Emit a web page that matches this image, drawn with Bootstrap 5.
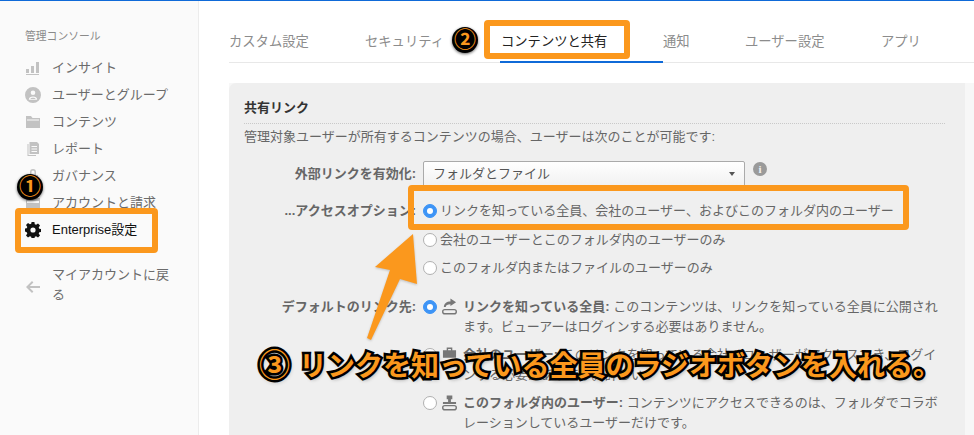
<!doctype html>
<html lang="ja"><head><meta charset="utf-8">
<link rel="stylesheet" href="https://cdn.jsdelivr.net/npm/bootstrap@5.3.0/dist/css/bootstrap.min.css">
<style>
html,body{height:435px;overflow:hidden}
body{font-family:"Liberation Sans","Noto Sans CJK JP",sans-serif;font-size:13px;line-height:20px;color:#666;background:#fff;position:relative}
.shell{height:435px;border-top:1px solid #0f6ad8}
.side{width:199px;flex:none;background:#fafafa;border-right:1px solid #ececec;padding:28px 0 0 25px}
.side-title{font-size:10.8px;line-height:14px;color:#8a8a8a;margin-bottom:11px}
.side-item{display:flex;align-items:center;height:27px;color:#6b6b6b}
.side-item svg{width:16px;height:16px;flex:none;margin-right:11px;fill:#c2c2c2}
.side-item.now{color:#111;height:28px}
.side-item.now svg{fill:#111}
.side-back{display:flex;align-items:center;margin-top:21px;width:145px;color:#6b6b6b;line-height:20px}
.side-back svg{width:16px;height:16px;flex:none;margin-right:11px;fill:#c2c2c2;margin-top:4px}
.main-col{flex:1;min-width:0;padding:0 0 0 30px;background:#fff}
.tabbar{height:62px;border-bottom:1px solid #e8e8e8;display:flex;align-items:flex-end}
.tabbar a{display:block;height:30px;line-height:20px;font-size:13.3px;color:#8c8c8c;text-decoration:none;white-space:nowrap}
.tabbar a.on{color:#222;border-bottom:2px solid #0f6ad8;height:31px;margin-bottom:-1px;width:163px;padding-left:1px}
.panel-wrap{margin-top:20px;display:flex;height:352px;background:#f7f7f7}
.panel-box{width:736px;background:#efefef;border-top-left-radius:7px;padding:15px 20px 0 15px}
.panel-head{font-weight:700;color:#333;padding-bottom:5px;border-bottom:1px dotted #c9c9c9;margin-bottom:3px}
.intro-line{margin-bottom:14px}
.rowline{display:flex}
.lab{width:179px;flex:none;text-align:right;font-weight:700;color:#666;padding-right:7px;white-space:nowrap}
.picker{width:322px;height:26px;display:flex;align-items:center;justify-content:space-between;border:1px solid #aaa;border-radius:2px 2px 0 0;background:linear-gradient(#fff,#f1f1f1);padding:0 9px;color:#555}
.caret-mini{width:0;height:0;border:3px solid transparent;border-top:4px solid #555;border-bottom:0}
.info-dot{width:14px;height:14px;border-radius:50%;background:#9a9a9a;color:#efefef;font:700 11px/14px "Liberation Serif",serif;text-align:center;margin:1px 0 0 8px}
.radio-line{display:flex;align-items:flex-start;height:28.5px;color:#666}
.form-check-input.pick{width:14px;height:14px;margin:3px 3px 0 0;flex:none;border:1px solid #b0b0b0;background-color:#fff;float:none}
.form-check-input.pick:checked{background-color:#3d94f6;border-color:#3d94f6;background-size:12px}
.link-glyph{width:15px;height:18px;flex:none;margin:1px 6px 0 5px;fill:#777}
.opt{width:482px}
.opt b{color:#666}
.mark-box{position:absolute;border:6px solid #fb981d;border-radius:4px}
.num-mark{position:absolute;width:26px;height:26px;border-radius:50%;background:#000;box-shadow:0 1px 3px #0009;color:#fb981d;font-weight:700;font-size:22px;line-height:25px;text-align:center}
.caption{position:absolute;left:259px;top:349px;font-weight:700;font-size:28px;line-height:34px;color:#fb981d;white-space:nowrap;-webkit-text-stroke:5px #000;paint-order:stroke fill;text-shadow:1px 2px 4px #0007}
.caption span{font-size:31px;margin-right:9px}
.arrow-over{position:absolute;left:360px;top:230px;width:65px;height:115px;filter:drop-shadow(0 1px 1px #0003)}
</style></head>
<body>
<div class="shell d-flex">
 <aside class="side">
  <div class="side-title">管理コンソール</div>
  <div class="side-item"><svg viewBox="0 0 16 16"><path d="M1 9h3v4H1zM6 6h3v7H6zM11 2h3v11h-3zM1 14h13v1H1z"/></svg>インサイト</div>
  <div class="side-item"><svg viewBox="0 0 16 16"><path fill-rule="evenodd" d="M8 0a8 8 0 1 1 0 16A8 8 0 0 1 8 0zm0 3.500a2.300 2.300 0 1 0 0 4.600 2.300 2.300 0 0 0 0-4.600zM3.800 12.800h8.400c0-2-1.800-3.200-4.200-3.200s-4.200 1.200-4.200 3.200zm1.500-.8c.4-.9 1.400-1.300 2.700-1.300s2.300.4 2.700 1.300z"/></svg>ユーザーとグループ</div>
  <div class="side-item"><svg viewBox="0 0 16 16"><path fill-rule="evenodd" d="M1 2h5l1.500 2H15v10H1zm1 3.500v1h12v-1z"/></svg>コンテンツ</div>
  <div class="side-item"><svg viewBox="0 0 16 16"><path fill-rule="evenodd" d="M4.500 1H12l2 2v10H4.500zM6.500 5v1H12V5zm0 2.500v1H12v-1zm0 2.500v1H12v-1zM2.500 3h1v11H11v1H2.500z"/></svg>レポート</div>
  <div class="side-item"><svg viewBox="0 0 16 16"><path d="M3 7h10v8H3zM5 7V4a3 3 0 0 1 6 0v3H9.500V4a1.500 1.500 0 0 0-3 0v3z"/></svg>ガバナンス</div>
  <div class="side-item"><svg viewBox="0 0 16 16"><path fill-rule="evenodd" d="M1 3h14v11H1zm1 3v2h12V6z"/></svg>アカウントと請求</div>
  <div class="side-item now"><svg viewBox="0 0 16 16"><path fill-rule="evenodd" d="M6.600 0h2.800l.4 2.200 1.300.6 1.900-1.300 2 2-1.300 1.900.6 1.300 2.200.4v2.800l-2.200.4-.6 1.300 1.300 1.900-2 2-1.900-1.300-1.300.6-.4 2.200H6.600l-.4-2.200-1.300-.6-1.900 1.300-2-2 1.300-1.900-.6-1.300L-.5 9.400V6.600l2.200-.4.600-1.300L1 3l2-2 1.900 1.300 1.300-.6zM8 5.400a2.600 2.600 0 1 0 0 5.200 2.600 2.600 0 0 0 0-5.200z"/></svg>Enterprise設定</div>
  <div class="side-back"><svg viewBox="0 0 16 16"><path d="M7 2l1.400 1.400L4.800 7H15v2H4.800l3.600 3.600L7 14 1 8z"/></svg><span>マイアカウントに戻る</span></div>
 </aside>
 <div class="main-col">
  <nav class="tabbar">
   <a href="#" style="width:136px">カスタム設定</a>
   <a href="#" style="width:135px">セキュリティ</a>
   <a href="#" class="on">コンテンツと共有</a>
   <a href="#" style="width:82px">通知</a>
   <a href="#" style="width:136px">ユーザー設定</a>
   <a href="#">アプリ</a>
  </nav>
  <div class="panel-wrap">
   <section class="panel-box">
    <div class="panel-head">共有リンク</div>
    <div class="intro-line">管理対象ユーザーが所有するコンテンツの場合、ユーザーは次のことが可能です:</div>
    <div class="rowline" style="height:36px"><div class="lab" style="line-height:26px">外部リンクを有効化:</div><div class="picker"><span>フォルダとファイル</span><i class="caret-mini"></i></div><div class="info-dot">i</div></div>
    <div class="rowline" style="padding-top:4px"><div class="lab">...アクセスオプション:</div>
     <div>
      <label class="radio-line"><input class="form-check-input pick" type="radio" name="a" checked>リンクを知っている全員、会社のユーザー、およびこのフォルダ内のユーザー</label>
      <label class="radio-line"><input class="form-check-input pick" type="radio" name="a">会社のユーザーとこのフォルダ内のユーザーのみ</label>
      <label class="radio-line"><input class="form-check-input pick" type="radio" name="a">このフォルダ内またはファイルのユーザーのみ</label>
     </div>
    </div>
    <div class="rowline" style="margin-top:10px"><div class="lab">デフォルトのリンク先:</div>
     <div>
      <div class="d-flex mb-2"><input class="form-check-input pick" type="radio" name="b" checked style="margin-right:0"><svg class="link-glyph" viewBox="0 0 16 18"><path d="M9 0l6 4-6 4V6C6 6 4 7 4 9H2c0-4 3-6 7-6zM3 11h10a2.500 2.500 0 0 1 0 6H3a2.500 2.500 0 0 1 0-6zm0 1.500a1 1 0 0 0 0 3h10a1 1 0 0 0 0-3z"/></svg><div class="opt"><b>リンクを知っている全員:</b> このコンテンツは、リンクを知っている全員に公開されます。ビューアーはログインする必要はありません。</div></div>
      <div class="d-flex mb-2"><input class="form-check-input pick" type="radio" name="b" style="margin-right:0"><svg class="link-glyph" viewBox="0 0 16 18"><path d="M1 4h14v8H1zM5 4V1h6v3H9.500V2.500h-3V4z"/></svg><div class="opt"><b>会社のユーザー:</b> このリンクを知っている会社のユーザーがアクセスでき、ログインする必要があります。詳しい</div></div>
      <div class="d-flex"><input class="form-check-input pick" type="radio" name="b" style="margin-right:0"><svg class="link-glyph" viewBox="0 0 16 18"><path d="M5 1h6v4H9.500v3H15v2H1V8h5.500V5H5zM3 11h10a2.500 2.500 0 0 1 0 6H3a2.500 2.500 0 0 1 0-6zm0 1.500a1 1 0 0 0 0 3h10a1 1 0 0 0 0-3z"/></svg><div class="opt"><b>このフォルダ内のユーザー:</b> コンテンツにアクセスできるのは、フォルダでコラボレーションしているユーザーだけです。</div></div>
     </div>
    </div>
   </section>
  </div>
 </div>
</div>
<div class="mark-box" style="left:15px;top:208px;width:143px;height:45px"></div>
<div class="mark-box" style="left:484px;top:20px;width:146px;height:39px"></div>
<div class="mark-box" style="left:408px;top:185px;width:501px;height:45px"></div>
<div class="num-mark" style="left:17px;top:174px">①</div>
<div class="num-mark" style="left:452px;top:27px">②</div>
<svg class="arrow-over" viewBox="360 230 65 115"><path fill="#fb981d" d="M413 234 375 267 390 270 367 338 371 340 400 279 417 284z"/></svg>
<div class="caption"><span>③</span>リンクを知っている全員のラジオボタンを入れる。</div>
</body></html>
